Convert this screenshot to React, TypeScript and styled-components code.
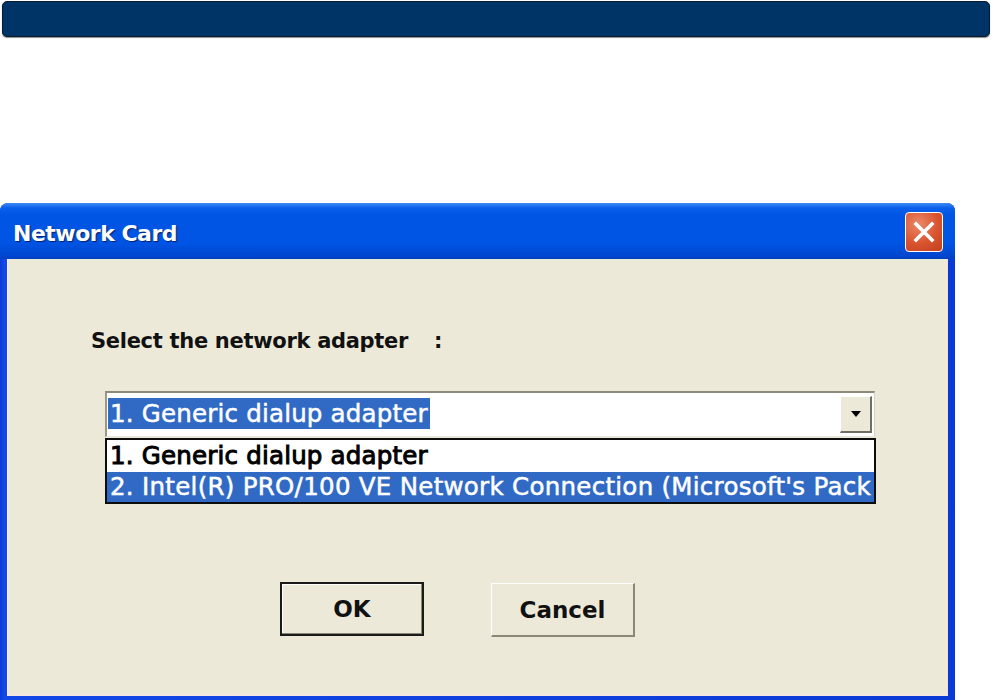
import React from 'react'
import styled, { createGlobalStyle } from 'styled-components'

const GlobalStyle = createGlobalStyle`
  html, body {
    margin: 0;
    padding: 0;
    background: #ffffff;
    overflow: hidden;
  }
  body {
    font-family: Tahoma, "DejaVu Sans", "Liberation Sans", sans-serif;
  }
`

const Page = styled.div`
  width: 993px;
  height: 700px;
  display: flex;
  flex-direction: column;
`

const TopBar = styled.div`
  margin: 1px 3px 0 2px;
  height: 34px;
  background: #003366;
  border: 1px solid #0b1b2c;
  border-radius: 5px;
  box-shadow: 0 1px 1px rgba(0, 0, 0, 0.45);
`

const Dialog = styled.div`
  margin-top: 166px;
  width: 955px;
  flex: 1;
  display: flex;
  flex-direction: column;
  background: linear-gradient(to right, #0a3ad6 0, #1248e6 4px, #0a3ad6 100%);
  border-radius: 8px 8px 0 0;
  padding: 0 7px 4px 7px;
  box-sizing: border-box;
`

const TitleBar = styled.div`
  height: 56px;
  margin: 0 -7px;
  padding: 0 12px 0 13px;
  display: flex;
  align-items: center;
  justify-content: space-between;
  border-radius: 8px 8px 0 0;
  background: linear-gradient(
    to bottom,
    #3d8bf7 0,
    #0a5fea 5px,
    #0055e4 12px,
    #0054e3 40px,
    #0047d0 52px,
    #003fc2 56px
  );
`

const Title = styled.span`
  font-family: "DejaVu Sans", sans-serif;
  font-weight: bold;
  font-size: 22px;
  letter-spacing: -0.5px;
  color: #ffffff;
  text-shadow: 1px 1px 1px #0a1f6a;
  margin-top: 5px;
`

const CloseButton = styled.div`
  width: 36px;
  height: 38px;
  margin-top: 2px;
  border: 1.5px solid #ffffff;
  border-radius: 4px;
  background: radial-gradient(circle at 35% 30%, #ea8a6a 0, #d9532e 55%, #c2401f 100%);
  display: flex;
  align-items: center;
  justify-content: center;
`

const Body = styled.div`
  flex: 1;
  background: #ece9d8;
  border-left: 1px solid #f6f3ea;
  border-right: 1px solid #f2ded6;
  border-bottom: 2px solid #f4e6e0;
  padding: 69px 0 0 83px;
  display: flex;
  flex-direction: column;
`

const Label = styled.div`
  font-family: "DejaVu Sans", sans-serif;
  font-weight: bold;
  font-size: 21px;
  letter-spacing: -0.3px;
  color: #111;
  height: 26px;
  line-height: 26px;
  white-space: pre;
`

const Colon = styled.span`
  margin-left: 26px;
`

const ComboWrap = styled.div`
  position: relative;
  margin: 37px 0 0 14px;
  width: 770px;
`

const Combo = styled.div`
  height: 46px;
  box-sizing: border-box;
  background: #ffffff;
  border-top: 2px solid #8c8a7d;
  border-left: 2px solid #9a9888;
  border-right: 1px solid #d6d3c4;
  border-bottom: 1px solid #e8e6dc;
  display: flex;
  align-items: center;
  padding: 0 2px 0 1px;
`

const SelectedText = styled.span`
  background: #316ac5;
  color: #ffffff;
  height: 31px;
  line-height: 31px;
  padding: 0 2px 0 2px;
  margin-top: -2px;
  font-family: "DejaVu Sans", sans-serif;
  font-size: 24.5px;
  letter-spacing: 0.2px;
  -webkit-text-stroke: 0.5px #ffffff;
`

const DropButton = styled.div`
  margin-left: auto;
  width: 32px;
  height: 37px;
  box-sizing: border-box;
  background: #ece9d8;
  border-top: 1px solid #ffffff;
  border-left: 1px solid #ffffff;
  border-right: 2px solid #716f64;
  border-bottom: 2px solid #716f64;
  display: flex;
  align-items: center;
  justify-content: center;
`

const Arrow = styled.div`
  width: 0;
  height: 0;
  border-left: 5px solid transparent;
  border-right: 5px solid transparent;
  border-top: 6px solid #000;
`

const ListBox = styled.div`
  position: absolute;
  left: 0;
  top: 47px;
  width: 771px;
  box-sizing: border-box;
  border: 2px solid #0c0c0c;
  background: #ffffff;
  overflow: hidden;
`

const ListItem = styled.div<{ $selected?: boolean }>`
  height: ${(p) => (p.$selected ? 30 : 32)}px;
  line-height: ${(p) => (p.$selected ? 30 : 32)}px;
  padding-left: 3px;
  white-space: nowrap;
  overflow: hidden;
  background: ${(p) => (p.$selected ? '#316ac5' : '#ffffff')};
  color: ${(p) => (p.$selected ? '#ffffff' : '#000000')};
  font-family: "DejaVu Sans", sans-serif;
  font-size: 24.5px;
  letter-spacing: ${(p) => (p.$selected ? '0.28px' : '0.2px')};
  -webkit-text-stroke: ${(p) => (p.$selected ? '0.5px #ffffff' : '1px #000000')};
`

const ButtonRow = styled.div`
  margin: 145px 0 0 189px;
  display: flex;
  gap: 67px;
`

const Button = styled.div<{ $default?: boolean }>`
  width: 144px;
  height: 54px;
  box-sizing: border-box;
  display: flex;
  align-items: center;
  justify-content: center;
  background: #ece9d8;
  font-family: "DejaVu Sans", sans-serif;
  font-weight: bold;
  font-size: 23px;
  color: #111;
  ${(p) =>
    p.$default
      ? `border: 2px solid #1a1a1a; box-shadow: inset -1px -1px 0 #8a8878, inset 1px 1px 0 #fff;`
      : `border-top: 1px solid #ffffff; border-left: 1px solid #ffffff; border-right: 2px solid #8a8878; border-bottom: 2px solid #8a8878; margin-top: 1px;`}
`

export default function App() {
  return (
    <Page>
      <GlobalStyle />
      <TopBar />
      <Dialog>
        <TitleBar>
          <Title>Network Card</Title>
          <CloseButton>
            <svg width="26" height="26" viewBox="0 0 26 26">
              <path d="M5 5 L21 21 M21 5 L5 21" stroke="#fff" strokeWidth="3.6" strokeLinecap="square" />
            </svg>
          </CloseButton>
        </TitleBar>
        <Body>
          <Label>
            Select the network adapter<Colon>:</Colon>
          </Label>
          <ComboWrap>
            <Combo>
              <SelectedText>1. Generic dialup adapter</SelectedText>
              <DropButton>
                <Arrow />
              </DropButton>
            </Combo>
            <ListBox>
              <ListItem>1. Generic dialup adapter</ListItem>
              <ListItem $selected>2. Intel(R) PRO/100 VE Network Connection (Microsoft's Pack</ListItem>
            </ListBox>
          </ComboWrap>
          <ButtonRow>
            <Button $default>OK</Button>
            <Button>Cancel</Button>
          </ButtonRow>
        </Body>
      </Dialog>
    </Page>
  )
}
